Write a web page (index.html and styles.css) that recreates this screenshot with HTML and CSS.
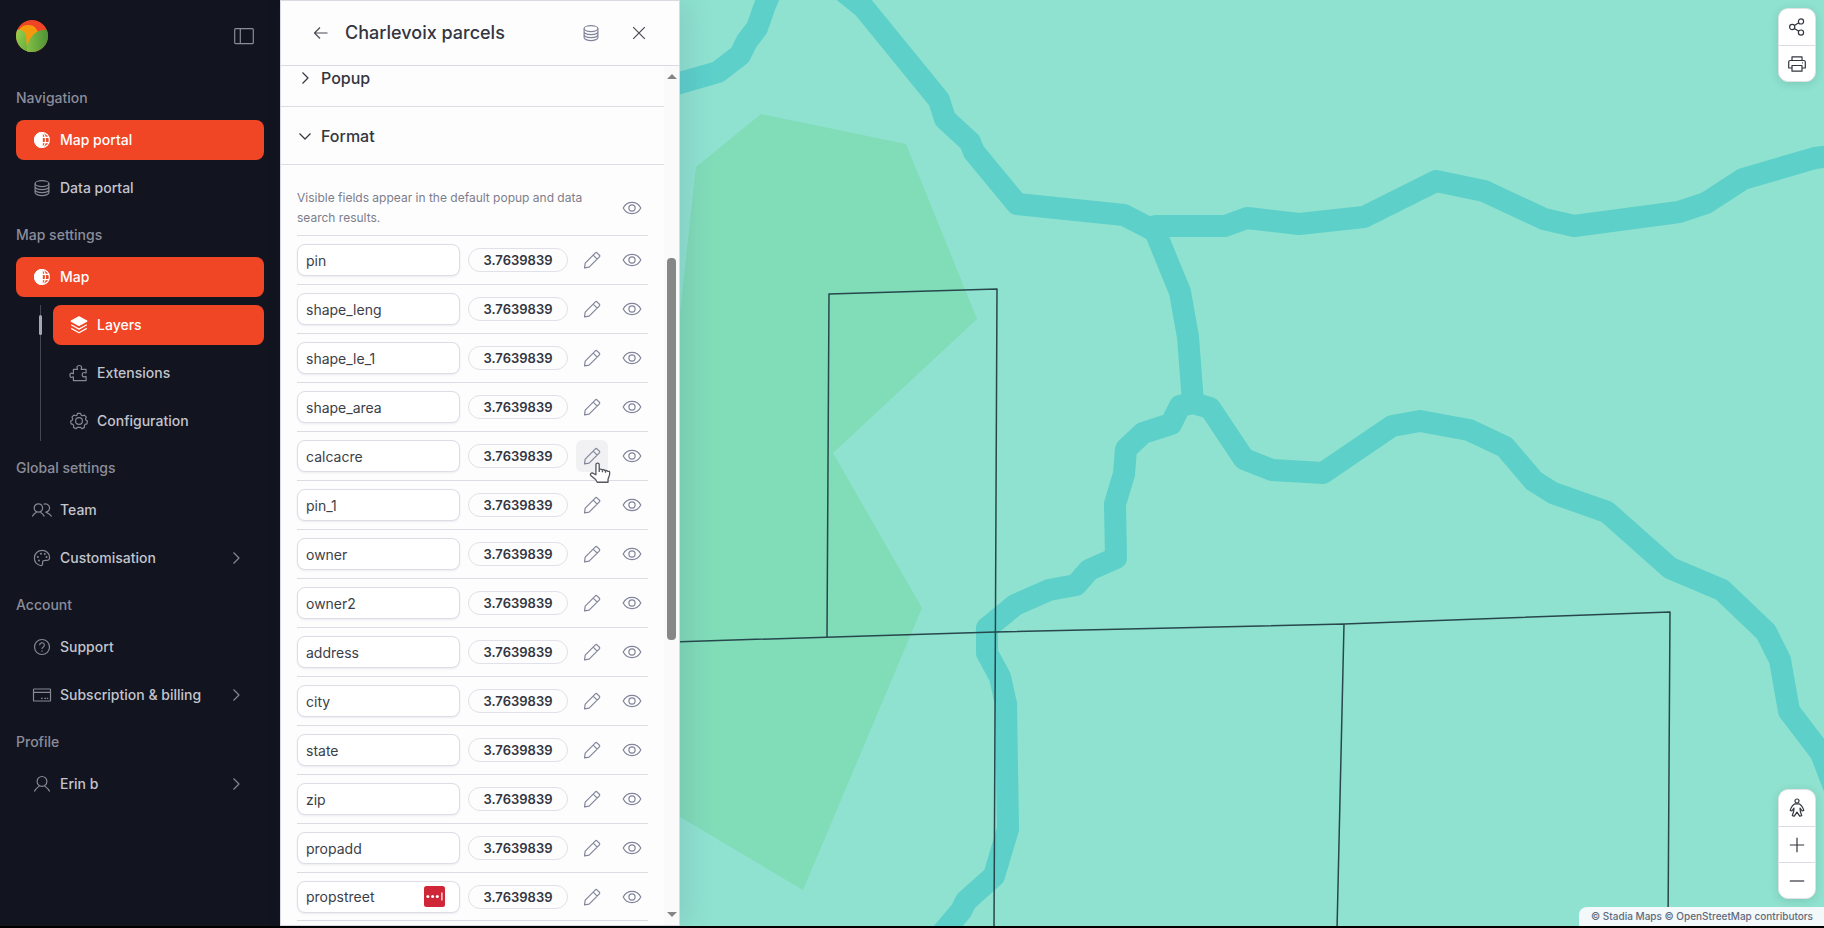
FILE: index.html
```html
<!DOCTYPE html>
<html lang="en">

<head>
  <meta charset="UTF-8" />
  <meta name="viewport" content="width=device-width, initial-scale=1.0" />
  <title>Charlevoix parcels - Map portal</title>
  <link rel="stylesheet" href="styles.css">
</head>

<body>
  <!-- Icon sprite -->
  <svg class="sprite" aria-hidden="true">
    <symbol id="i-collapse" viewBox="0 0 20 20"><rect x="0.7" y="2.7" width="18.6" height="15" rx="1" /><path d="M6.3 2.7v15" /></symbol>
    <symbol id="i-globe" viewBox="0 0 20 20">
      <path d="M10 2.6a7.4 7.4 0 0 0 0 14.8z" fill="currentColor" />
      <circle cx="10" cy="10" r="7.4" />
      <path d="M10 2.6v14.8M10 7.4h7M10 12.6h7M11 2.6c3.400 4.400 3.400 10.400 0 14.800" />
    </symbol>
    <symbol id="i-db" viewBox="0 0 20 20">
      <ellipse cx="10" cy="5.600" rx="6.900" ry="3" />
      <path d="M3.100 5.600v8.800c0 1.700 3.100 3.200 6.900 3.200s6.900-1.500 6.900-3.200V5.600M3.100 8.600c0 1.700 3.100 3 6.900 3s6.900-1.300 6.900-3M3.100 11.600c0 1.700 3.100 3 6.900 3s6.900-1.300 6.900-3" />
    </symbol>
    <symbol id="i-layers" viewBox="0 0 20 20">
      <path d="M10 1.800l7.800 4.300L10 10.400 2.200 6.100z" fill="currentColor" />
      <path d="M2.200 9.800l7.800 4.300 7.800-4.300M2.200 13.400l7.800 4.300 7.800-4.300" />
    </symbol>
    <symbol id="i-puzzle" viewBox="0 0 20 20">
      <path d="M4.400 17.600v-3.800c-.6-.2-.9.6-1.700.6-1.100 0-1.800-1-1.800-2.100s.7-2.100 1.800-2.100c.8 0 1.100.8 1.700.6V6.400h4c.4-.6-.4-1-.4-1.900 0-1.200 1-2 2.300-2s2.300.8 2.300 2c0 .9-.8 1.300-.4 1.900h4.900v3.400c-.5.5-1.200-.3-2-.3-1.100 0-1.900.9-1.900 2.200s.8 2.200 1.900 2.200c.8 0 1.500-.8 2-.3v4z" />
    </symbol>
    <symbol id="i-gear" viewBox="0 0 20 20">
      <circle cx="10" cy="10" r="3.400" />
      <path d="M8.600 2.300h2.800l.8 1.800 1.300.6 1.900-.6 1.900 2-.8 1.700.5 1.400 1.500.9v-.1l-.6 2.800-1.800.5-.8 1.200.2 1.900-2.500 1.300-1.400-1.300H8.400L7 17.700l-2.500-1.300.2-1.900-.8-1.200-1.800-.5-.4-2.800 1.500-.8.500-1.400-.8-1.700 1.900-2 1.900.6 1.300-.6z" />
    </symbol>
    <symbol id="i-team" viewBox="0 0 20 20">
      <circle cx="6.400" cy="8" r="4.200" />
      <path d="M.4 16.400c1-2.400 2.400-3.300 4.100-4.200M12.400 16.400c-1-2.400-2.400-3.300-4.100-4.200M11.600 4.200a4.200 4.200 0 1 1 2.200 8c2.200.8 4.500 2 5.800 4.200" />
    </symbol>
    <symbol id="i-palette" viewBox="0 0 20 20">
      <path d="M10.200 2.400c4.200 0 7.400 3.200 7.400 6.800 0 2.400-1.300 3.200-3 3.200-1.800 0-3.700-.3-4 1.300-.3 1.500.4 2-.3 3.200-.6.9-1.700.7-2.600.4C4.700 16.200 2.400 13.600 2.400 10c0-4.400 3.500-7.600 7.800-7.600z" />
      <g fill="currentColor" stroke="none"><circle cx="5.800" cy="9" r="1" /><circle cx="7" cy="12.500" r="1" /><circle cx="9" cy="5.800" r="1" /><circle cx="12.800" cy="6" r="1" /><circle cx="14.500" cy="9" r="1" /></g>
    </symbol>
    <symbol id="i-help" viewBox="0 0 20 20">
      <circle cx="10" cy="10" r="7.500" />
      <path d="M7.600 8.200a2.400 2.400 0 1 1 3.500 2.100c-.7.400-1.100.8-1.100 1.700M10 13.400v1.300" />
    </symbol>
    <symbol id="i-card" viewBox="0 0 20 20">
      <rect x="1.500" y="4" width="17" height="12" rx="0.600" />
      <path d="M1.500 7.400h17M9 13.400h1.600M12.400 13.400H14M14.800 13.400h1.400" />
    </symbol>
    <symbol id="i-user" viewBox="0 0 20 20">
      <circle cx="10" cy="7.400" r="4.900" />
      <path d="M2.300 17.400c1.200-2.600 3-3.800 5.200-5.500M17.700 17.400c-1.200-2.600-3-3.800-5.200-5.500" />
    </symbol>
    <symbol id="i-right" viewBox="0 0 16 16"><path d="M5.500 2.500L11 8l-5.500 5.500" /></symbol>
    <symbol id="i-down" viewBox="0 0 16 16"><path d="M2.500 5.500L8 11l5.500-5.500" /></symbol>
    <symbol id="i-back" viewBox="0 0 16 16"><path d="M14.500 8h-13M7 2.500L1.500 8 7 13.500" /></symbol>
    <symbol id="i-close" viewBox="0 0 16 16"><path d="M2.200 2.200l11.600 11.600M13.800 2.200L2.200 13.800" /></symbol>
    <symbol id="i-eye" viewBox="0 0 20 20">
      <path d="M1.200 10C3.200 6.200 6.300 4.400 10 4.400s6.800 1.800 8.800 5.600c-2 3.800-5.100 5.600-8.800 5.600S3.200 13.800 1.200 10z" />
      <circle cx="10" cy="10" r="3.100" />
    </symbol>
    <symbol id="i-pencil" viewBox="0 0 20 20">
      <path d="M2.500 17.800l.7-4.600L13.400 2.900q.8-.8 1.600 0l2.400 2.300q.8.8 0 1.600L7.100 17.100zM11.200 5.100l4 4" />
    </symbol>
    <symbol id="i-share" viewBox="0 0 20 20">
      <circle cx="5.200" cy="10" r="2.600" /><circle cx="14" cy="4.400" r="2.600" /><circle cx="14" cy="15.600" r="2.600" />
      <path d="M7.400 8.600l4.400-2.800M7.400 11.400l4.400 2.800" />
    </symbol>
    <symbol id="i-print" viewBox="0 0 20 20">
      <path d="M5 6.500V2.800h10v3.700M5 14H1.700V8q0-1.500 1.500-1.500h13.600q1.500 0 1.500 1.500v6H15M5 11.500h10v5.700H5zM15 8.800h.8" />
    </symbol>
    <symbol id="i-person" viewBox="0 0 20 20">
      <circle cx="10" cy="3" r="2" />
      <path d="M8 5.800h4c2.600 1.200 3.900 3.800 4.800 6.600l-1.600.6-2.200-2.800.3 3 1.400 4.400-2 .6L10 14.100l-2.700 4.100-2-.6 1.400-4.400.3-3L4.800 13l-1.600-.6C4.100 9.600 5.400 7 8 5.800z" />
    </symbol>
    <symbol id="i-plus" viewBox="0 0 20 20"><path d="M2.800 10h14.400M10 2.800v14.400" /></symbol>
    <symbol id="i-minus" viewBox="0 0 20 20"><path d="M2.800 10h14.400" /></symbol>
  </svg>

  <div class="app">
    <!-- Sidebar -->
    <nav class="sidebar">
      <div class="sidebar-top">
        <svg class="logo" viewBox="0 0 32 32" role="img" aria-label="Home">
          <defs>
            <clipPath id="logo-clip"><circle cx="16" cy="16" r="16" /></clipPath>
            <linearGradient id="leaf-left" x1="0" y1="0" x2="1" y2="1"><stop offset="0" stop-color="#9ad04c" /><stop offset="1" stop-color="#5fae3f" /></linearGradient>
            <linearGradient id="leaf-right" x1="0" y1="0" x2="1" y2="0"><stop offset="0" stop-color="#82bf45" /><stop offset="1" stop-color="#4f9237" /></linearGradient>
          </defs>
          <g clip-path="url(#logo-clip)">
            <rect width="32" height="32" fill="#ef4425" />
            <path d="M3 10c2-4 6-5 10-5 5 0 7 3 9 7l-8 20H4z" fill="#f59a0c" />
            <path d="M0 10c6-1 9 1 10 6 .6 4 0 8 2 16H0z" fill="url(#leaf-left)" />
            <path d="M32 10c-9-1-14 3-18 9-2 4-4 8-3 13h21z" fill="url(#leaf-right)" />
          </g>
        </svg>
        <button class="collapse-btn" aria-label="Collapse sidebar"><svg class="icon"><use href="#i-collapse" /></svg></button>
      </div>

      <section class="nav-group">
        <h2>Navigation</h2>
        <a class="nav-item active" href="#"><svg class="icon"><use href="#i-globe" /></svg>Map portal</a>
        <a class="nav-item" href="#"><svg class="icon"><use href="#i-db" /></svg>Data portal</a>
      </section>

      <section class="nav-group">
        <h2>Map settings</h2>
        <a class="nav-item active" href="#"><svg class="icon"><use href="#i-globe" /></svg>Map</a>
        <div class="sub-nav">
          <a class="nav-item active" href="#"><svg class="icon"><use href="#i-layers" /></svg>Layers</a>
          <a class="nav-item" href="#"><svg class="icon"><use href="#i-puzzle" /></svg>Extensions</a>
          <a class="nav-item" href="#"><svg class="icon"><use href="#i-gear" /></svg>Configuration</a>
        </div>
      </section>

      <section class="nav-group">
        <h2>Global settings</h2>
        <a class="nav-item" href="#"><svg class="icon"><use href="#i-team" /></svg>Team</a>
        <a class="nav-item" href="#"><svg class="icon"><use href="#i-palette" /></svg>Customisation<svg class="chevron"><use href="#i-right" /></svg></a>
      </section>

      <section class="nav-group">
        <h2>Account</h2>
        <a class="nav-item" href="#"><svg class="icon"><use href="#i-help" /></svg>Support</a>
        <a class="nav-item" href="#"><svg class="icon"><use href="#i-card" /></svg>Subscription &amp; billing<svg class="chevron"><use href="#i-right" /></svg></a>
      </section>

      <section class="nav-group">
        <h2>Profile</h2>
        <a class="nav-item" href="#"><svg class="icon"><use href="#i-user" /></svg>Erin b<svg class="chevron"><use href="#i-right" /></svg></a>
      </section>
    </nav>

    <!-- Layer panel -->
    <aside class="panel">
      <header class="panel-header">
        <button class="icon-btn dark" aria-label="Back"><svg class="icon-sm"><use href="#i-back" /></svg></button>
        <h1>Charlevoix parcels</h1>
        <button class="icon-btn" aria-label="View data"><svg class="icon"><use href="#i-db" /></svg></button>
        <button class="icon-btn dark" aria-label="Close"><svg class="icon-sm"><use href="#i-close" /></svg></button>
      </header>

      <div class="panel-body">
        <div class="panel-content">
          <button class="accordion first"><svg class="icon-sm"><use href="#i-right" /></svg>Popup</button>
          <button class="accordion" aria-expanded="true"><svg class="icon-sm"><use href="#i-down" /></svg>Format</button>

          <div class="format">
            <div class="hint">
              <p>Visible fields appear in the default popup and data search results.</p>
              <button class="icon-btn" aria-label="Toggle all fields"><svg class="icon"><use href="#i-eye" /></svg></button>
            </div>

            <div class="field">
              <input type="text" aria-label="Field name" value="pin" />
              <button class="value">3.7639839</button>
              <button class="icon-btn" aria-label="Edit"><svg class="icon"><use href="#i-pencil" /></svg></button>
              <button class="icon-btn" aria-label="Visible"><svg class="icon"><use href="#i-eye" /></svg></button>
            </div>
            <div class="field">
              <input type="text" aria-label="Field name" value="shape_leng" />
              <button class="value">3.7639839</button>
              <button class="icon-btn" aria-label="Edit"><svg class="icon"><use href="#i-pencil" /></svg></button>
              <button class="icon-btn" aria-label="Visible"><svg class="icon"><use href="#i-eye" /></svg></button>
            </div>
            <div class="field">
              <input type="text" aria-label="Field name" value="shape_le_1" />
              <button class="value">3.7639839</button>
              <button class="icon-btn" aria-label="Edit"><svg class="icon"><use href="#i-pencil" /></svg></button>
              <button class="icon-btn" aria-label="Visible"><svg class="icon"><use href="#i-eye" /></svg></button>
            </div>
            <div class="field">
              <input type="text" aria-label="Field name" value="shape_area" />
              <button class="value">3.7639839</button>
              <button class="icon-btn" aria-label="Edit"><svg class="icon"><use href="#i-pencil" /></svg></button>
              <button class="icon-btn" aria-label="Visible"><svg class="icon"><use href="#i-eye" /></svg></button>
            </div>
            <div class="field">
              <input type="text" aria-label="Field name" value="calcacre" />
              <button class="value">3.7639839</button>
              <button class="icon-btn hovered" aria-label="Edit">
                <svg class="icon"><use href="#i-pencil" /></svg>
                <svg class="pointer" viewBox="0 0 20 20">
                  <path d="M6.300 11.600V2.600q0-1.600 1.500-1.600t1.500 1.600v4.200q1.500-.9 2.700.3 1.500-.6 2.500.6 1.700-.5 2.500.8l1.600.1q.5 1 0 3.400l-1.300 3.600v2.800H7.500L6 15.900l-4.400-3.700q-.8-1.300.4-2 1.200-.5 2.300.3z" fill="#fff" />
                  <path d="M9.300 7v2M12.200 7.600v1.800M15 8.200v1.600" />
                </svg>
              </button>
              <button class="icon-btn" aria-label="Visible"><svg class="icon"><use href="#i-eye" /></svg></button>
            </div>
            <div class="field">
              <input type="text" aria-label="Field name" value="pin_1" />
              <button class="value">3.7639839</button>
              <button class="icon-btn" aria-label="Edit"><svg class="icon"><use href="#i-pencil" /></svg></button>
              <button class="icon-btn" aria-label="Visible"><svg class="icon"><use href="#i-eye" /></svg></button>
            </div>
            <div class="field">
              <input type="text" aria-label="Field name" value="owner" />
              <button class="value">3.7639839</button>
              <button class="icon-btn" aria-label="Edit"><svg class="icon"><use href="#i-pencil" /></svg></button>
              <button class="icon-btn" aria-label="Visible"><svg class="icon"><use href="#i-eye" /></svg></button>
            </div>
            <div class="field">
              <input type="text" aria-label="Field name" value="owner2" />
              <button class="value">3.7639839</button>
              <button class="icon-btn" aria-label="Edit"><svg class="icon"><use href="#i-pencil" /></svg></button>
              <button class="icon-btn" aria-label="Visible"><svg class="icon"><use href="#i-eye" /></svg></button>
            </div>
            <div class="field">
              <input type="text" aria-label="Field name" value="address" />
              <button class="value">3.7639839</button>
              <button class="icon-btn" aria-label="Edit"><svg class="icon"><use href="#i-pencil" /></svg></button>
              <button class="icon-btn" aria-label="Visible"><svg class="icon"><use href="#i-eye" /></svg></button>
            </div>
            <div class="field">
              <input type="text" aria-label="Field name" value="city" />
              <button class="value">3.7639839</button>
              <button class="icon-btn" aria-label="Edit"><svg class="icon"><use href="#i-pencil" /></svg></button>
              <button class="icon-btn" aria-label="Visible"><svg class="icon"><use href="#i-eye" /></svg></button>
            </div>
            <div class="field">
              <input type="text" aria-label="Field name" value="state" />
              <button class="value">3.7639839</button>
              <button class="icon-btn" aria-label="Edit"><svg class="icon"><use href="#i-pencil" /></svg></button>
              <button class="icon-btn" aria-label="Visible"><svg class="icon"><use href="#i-eye" /></svg></button>
            </div>
            <div class="field">
              <input type="text" aria-label="Field name" value="zip" />
              <button class="value">3.7639839</button>
              <button class="icon-btn" aria-label="Edit"><svg class="icon"><use href="#i-pencil" /></svg></button>
              <button class="icon-btn" aria-label="Visible"><svg class="icon"><use href="#i-eye" /></svg></button>
            </div>
            <div class="field">
              <input type="text" aria-label="Field name" value="propadd" />
              <button class="value">3.7639839</button>
              <button class="icon-btn" aria-label="Edit"><svg class="icon"><use href="#i-pencil" /></svg></button>
              <button class="icon-btn" aria-label="Visible"><svg class="icon"><use href="#i-eye" /></svg></button>
            </div>
            <div class="field last">
              <div class="input-wrap">
                <input type="text" aria-label="Field name" value="propstreet" />
                <svg class="autofill" viewBox="0 0 21 21">
                  <rect width="21" height="21" rx="2.500" fill="#cf2738" />
                  <g fill="#fff"><circle cx="3.900" cy="10.500" r="1.500" /><circle cx="8.600" cy="10.500" r="1.500" /><circle cx="13.300" cy="10.500" r="1.500" /><rect x="17.300" y="6.500" width="1.200" height="8" /></g>
                </svg>
              </div>
              <button class="value">3.7639839</button>
              <button class="icon-btn" aria-label="Edit"><svg class="icon"><use href="#i-pencil" /></svg></button>
              <button class="icon-btn" aria-label="Visible"><svg class="icon"><use href="#i-eye" /></svg></button>
            </div>
          </div>
        </div>

        <div class="scrollbar">
          <span class="arrow up"></span>
          <div class="track"><div class="thumb"></div></div>
          <span class="arrow down"></span>
        </div>
      </div>
    </aside>

    <!-- Map -->
    <main class="map">
      <svg class="map-canvas" viewBox="680 0 1144 926" preserveAspectRatio="xMidYMid slice">
        <path class="wood" d="M761 114L906 144 977 319 833 453 922 608 803 890 680 817 660 803V420L680 312 696 167z" />
        <g class="river">
          <path d="M660 89L680 83 718 72 740 55 747 41 757 28 764 8 772-12" />
          <path d="M832-18L864 8 939 100 945 119 970 142 974 152 1017 204 1124 215 1155 231 1180 292 1188 337 1193 403" />
          <path d="M1156 226H1225L1247 218 1299 224 1364 217 1436 181 1484 191 1544 219 1574 226 1679 212 1706 203 1743 179 1815 158 1840 155" />
          <path d="M1193 403L1210 408 1244 459 1272 470 1323 473 1392 426 1420 421 1469 430 1505 447 1534 481 1553 493 1607 512 1670 568 1722 590 1766 632 1780 660 1789 711 1821 753 1834 787" />
          <path d="M1193 403L1180 406 1171 424 1143 433 1126 449 1124 474 1115 504 1116 558 1089 570 1076 585 1049 590 1015 605 987 628V653L1000 677 1006 704 1008 829 994 876 966 901 961 911 938 938" />
        </g>
        <g class="parcel">
          <path d="M827 637L829 294 997 289 994 930" />
          <path d="M670 642L995 632 1344 624 1670 612 1668 930M1344 624L1337 930" />
        </g>
      </svg>

      <div class="controls top">
        <button aria-label="Share"><svg class="icon"><use href="#i-share" /></svg></button>
        <button aria-label="Print"><svg class="icon"><use href="#i-print" /></svg></button>
      </div>
      <div class="controls bottom">
        <button aria-label="Street view"><svg class="icon"><use href="#i-person" /></svg></button>
        <button aria-label="Zoom in"><svg class="icon"><use href="#i-plus" /></svg></button>
        <button aria-label="Zoom out"><svg class="icon"><use href="#i-minus" /></svg></button>
      </div>
      <div class="attribution"><a href="#">© Stadia Maps</a> <a href="#">© OpenStreetMap contributors</a></div>
    </main>
  </div>
</body>

</html>
```
FILE: styles.css
```css
/* Base Styles */
* {
  box-sizing: border-box;
  margin: 0;
  padding: 0;
}

body {
  font-family: Inter, 'Liberation Sans', sans-serif;
  font-size: 14px;
  line-height: 20px;
  height: 100vh;
  padding-bottom: 2px;
  background-color: #000;
  color: #33353f;
  overflow: hidden;
}

button {
  font: inherit;
  color: inherit;
  background: none;
  border: none;
  cursor: pointer;
}

a {
  color: inherit;
  text-decoration: none;
}

.sprite {
  position: absolute;
  width: 0;
  height: 0;
}

svg {
  fill: none;
  stroke: currentColor;
  stroke-width: 1.2;
  stroke-linejoin: round;
  flex-shrink: 0;
}

.icon {
  width: 20px;
  height: 20px;
}

.icon-sm,
.chevron {
  width: 16px;
  height: 16px;
}

.app {
  display: flex;
  height: 100%;
}

/* Sidebar */
.sidebar {
  width: 280px;
  flex-shrink: 0;
  padding: 20px 16px;
  background-color: #12141f;
  display: flex;
  flex-direction: column;
  gap: 17px;
}

.sidebar-top {
  display: flex;
  justify-content: space-between;
  align-items: center;
  padding-right: 10px;
  margin-bottom: 19px;
}

.logo {
  width: 32px;
  height: 32px;
  stroke: none;
}

.collapse-btn {
  display: flex;
  color: #8a8c98;
}

.nav-group {
  display: flex;
  flex-direction: column;
  gap: 8px;
}

.nav-group h2 {
  font-size: 14px;
  font-weight: 500;
  color: #8b8d9b;
  margin-bottom: 4px;
}

.nav-item {
  display: flex;
  align-items: center;
  gap: 8px;
  height: 40px;
  padding: 0 16px;
  border-radius: 8px;
  font-weight: 500;
  color: #c3c4cd;
}

.nav-item .icon,
.nav-item .chevron {
  color: #868894;
}

.nav-item .chevron {
  margin-left: auto;
  margin-right: 4px;
}

.nav-item.active,
.nav-item.active .icon {
  color: #fff;
}

.nav-item.active {
  background-color: #f04626;
}

.sub-nav {
  display: flex;
  flex-direction: column;
  gap: 8px;
  margin-left: 24px;
  padding-left: 12px;
  border-left: 1px solid #444651;
  position: relative;
}

.sub-nav::before {
  content: '';
  position: absolute;
  left: -2px;
  top: 10px;
  width: 3px;
  height: 20px;
  border-radius: 2px;
  background-color: #a5a7b2;
}

/* Layer panel */
.panel {
  width: 400px;
  flex-shrink: 0;
  display: flex;
  flex-direction: column;
  background-color: #fdfdfe;
  border: 1px solid #d9dae1;
  z-index: 1;
  box-shadow: 10px 0 24px rgba(60, 80, 130, 0.12);
}

.panel-header {
  display: flex;
  align-items: center;
  gap: 8px;
  height: 65px;
  padding: 0 24px;
  border-bottom: 1px solid #d9dae1;
}

.panel-header h1 {
  flex: 1;
  font-size: 18px;
  font-weight: 500;
  line-height: 28px;
}

.panel-header .icon-btn:last-child {
  margin-left: 8px;
}

.icon-btn {
  width: 32px;
  height: 32px;
  flex-shrink: 0;
  display: flex;
  justify-content: center;
  align-items: center;
  border-radius: 6px;
  color: #83859a;
  position: relative;
}

.icon-btn.dark {
  color: #4a4c55;
}

.icon-btn.hovered {
  background-color: #f1f1f4;
}

.pointer {
  position: absolute;
  left: 13px;
  top: 22px;
  width: 22px;
  height: 22px;
  color: #55575f;
}

.panel-body {
  flex: 1;
  min-height: 0;
  display: flex;
}

.panel-content {
  flex: 1;
  min-width: 0;
  overflow: hidden;
}

.accordion {
  display: flex;
  align-items: center;
  gap: 8px;
  width: 100%;
  padding: 17px 16px 16px;
  border-bottom: 1px solid #dcdde4;
  font-size: 16px;
  font-weight: 500;
  line-height: 24px;
}

.accordion.first {
  padding-top: 0;
}

.format {
  padding: 23px 16px 0;
}

.hint {
  display: flex;
  align-items: center;
  gap: 24px;
  padding-bottom: 7px;
}

.hint p {
  flex: 1;
  font-size: 12px;
  color: #7c7e8b;
}

.field {
  display: flex;
  align-items: center;
  gap: 8px;
  height: 49px;
  border-top: 1px solid #dcdde4;
}

.field.last {
  border-bottom: 1px solid #dcdde4;
}

.field input {
  flex: 1;
  min-width: 0;
  width: 100%;
  height: 32px;
  padding: 0 8px;
  border: 1px solid #dcdde6;
  border-radius: 8px;
  background-color: #fff;
  box-shadow: 0 1px 2px rgba(30, 32, 60, 0.08);
  font: inherit;
  color: #3c3e48;
  outline: none;
}

.input-wrap {
  flex: 1;
  min-width: 0;
  display: flex;
  position: relative;
}

.autofill {
  position: absolute;
  right: 15px;
  top: 5px;
  width: 21px;
  height: 21px;
  stroke: none;
}

.value {
  width: 100px;
  height: 24px;
  border: 1px solid #e0e1e9;
  border-radius: 12px;
  font-size: 13px;
  font-weight: 600;
}

/* Scrollbar */
.scrollbar {
  width: 15px;
  display: flex;
  flex-direction: column;
  align-items: center;
  padding: 8px 0;
  background-color: #fafafa;
}

.arrow {
  border: 5px solid transparent;
}

.arrow.up {
  border-top: none;
  border-bottom-color: #858585;
}

.arrow.down {
  border-bottom: none;
  border-top-color: #858585;
}

.track {
  flex: 1;
  display: grid;
  grid-template-rows: 179fr 383fr 272fr;
}

.thumb {
  grid-row: 2;
  width: 9px;
  border-radius: 4px;
  background-color: #868888;
}

/* Map */
.map {
  flex: 1;
  min-width: 0;
  position: relative;
  overflow: hidden;
  background-color: #8fe2cf;
}

.map-canvas {
  display: block;
  width: 100%;
  height: 100%;
  stroke: none;
}

.wood {
  fill: #81dcb8;
}

.river {
  fill: none;
  stroke: #5dd0ca;
  stroke-width: 22px;
  stroke-linejoin: round;
  stroke-linecap: round;
}

.parcel {
  fill: none;
  stroke: #27474c;
  stroke-width: 1.5px;
}

.controls {
  position: absolute;
  right: 8px;
  display: flex;
  flex-direction: column;
  border: 1px solid #dfe3e6;
  border-radius: 10px;
  background-color: #fff;
  box-shadow: 0 2px 8px rgba(30, 60, 60, 0.15);
  color: #33353f;
}

.controls.top {
  top: 8px;
}

.controls.bottom {
  bottom: 27px;
}

.controls button {
  display: flex;
  justify-content: center;
  align-items: center;
  width: 36px;
  height: 36px;
}

.controls button + button {
  border-top: 1px solid #dcdde4;
}

.attribution {
  position: absolute;
  right: 0;
  bottom: 0;
  padding: 0 11px 0 12px;
  border-top-left-radius: 8px;
  background-color: #f3f8fa;
  font-size: 10px;
  font-weight: 500;
  line-height: 19px;
  color: #5f6b7c;
}
```
